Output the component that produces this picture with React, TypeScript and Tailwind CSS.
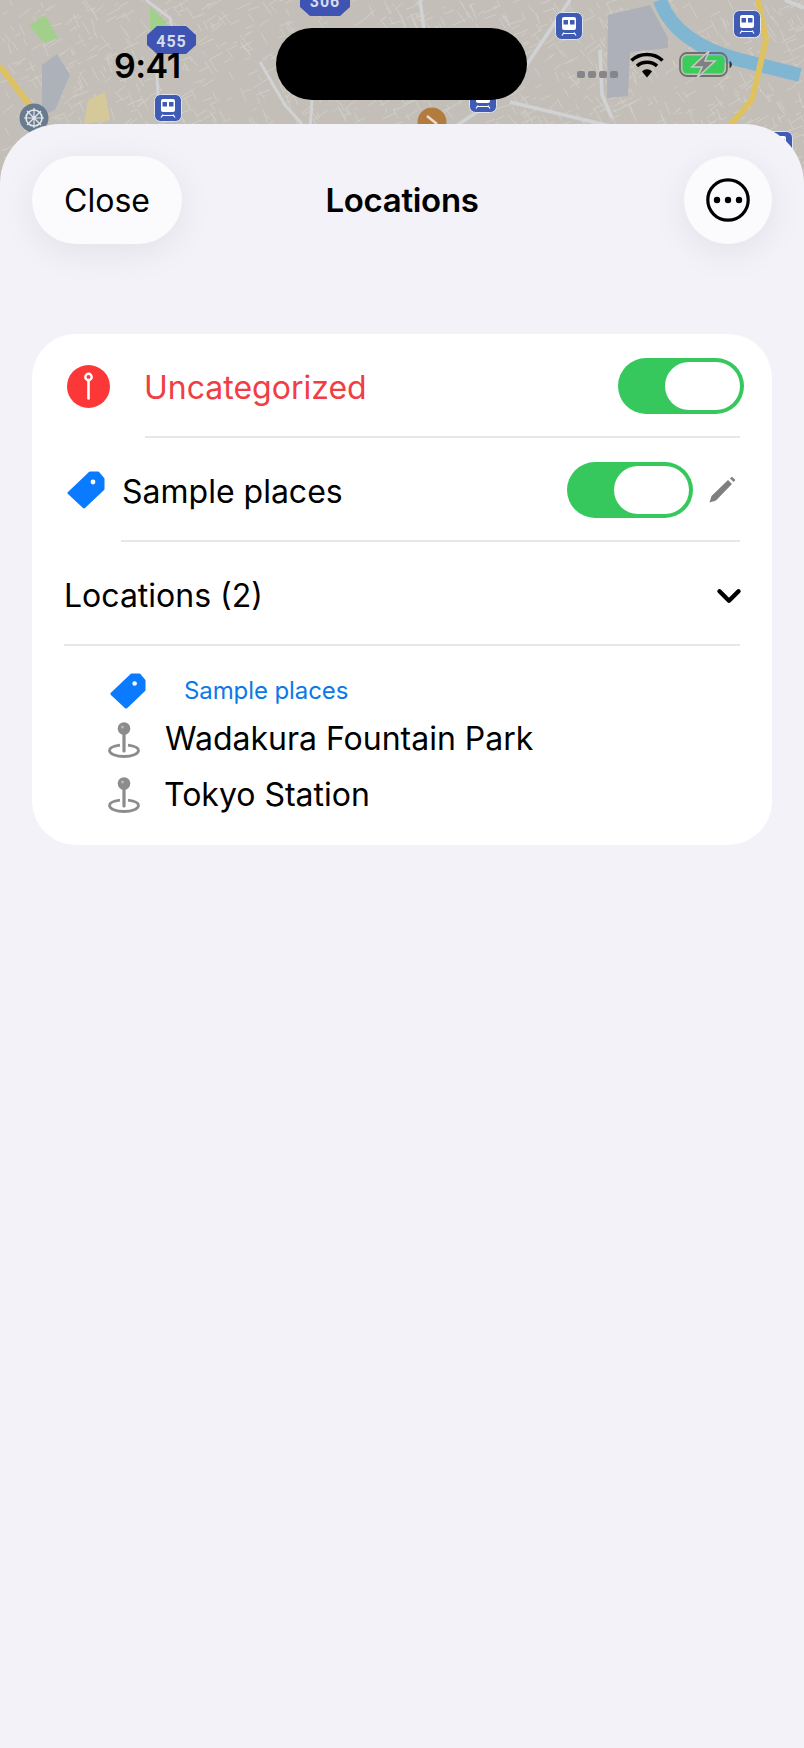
import { ChevronDown } from "lucide-react";

// seeded street network so the map looks the same on every render
function makeStreets() {
  let seed = 41;
  const rnd = () => {
    seed = (seed * 16807) % 2147483647;
    return seed / 2147483647;
  };
  const parts: string[] = [];
  for (let i = 0; i < 1500; i++) {
    const x = rnd() * 804;
    const y = rnd() * 210;
    const a = (i % 2 === 0 ? -0.5 : 1.05) + (rnd() - 0.5) * 0.4;
    const l = 4 + rnd() * 13;
    const x2 = x + Math.cos(a) * l;
    const y2 = y + Math.sin(a) * l;
    parts.push(`M${x.toFixed(1)} ${y.toFixed(1)}L${x2.toFixed(1)} ${y2.toFixed(1)}`);
  }
  return parts.join("");
}

const streets = makeStreets();

function Train({ x, y }: { x: number; y: number }) {
  return (
    <g transform={`translate(${x} ${y})`}>
      <rect x="0.5" y="0.5" width="27" height="27" rx="6" fill="#3f5bb4" stroke="#dfe3ee" strokeWidth="1" />
      <rect x="7" y="5" width="14" height="13" rx="2" fill="#fff" />
      <rect x="8.5" y="8" width="4.5" height="4.5" fill="#3f5bb4" />
      <rect x="15" y="8" width="4.5" height="4.5" fill="#3f5bb4" />
      <path d="M8 21.5h12M7 23.5l2-3M21 23.5l-2-3" stroke="#fff" strokeWidth="1.2" fill="none" />
    </g>
  );
}

function MapBackdrop() {
  return (
    <svg className="absolute top-0 left-0 w-[804px] h-[210px]" viewBox="0 0 804 210">
      <rect width="804" height="210" fill="#c3bfb8" />
      <path d={streets} stroke="#d3d0ca" strokeWidth="0.8" fill="none" />
      {/* parks and blocks */}
      <path d="M29 26L45 15L58 38L44 43Z" fill="#a3cf8d" />
      <path d="M150 6L166 22L168 30L150 30Z" fill="#a3cf8d" />
      <path d="M42 65L57 54L70 75L55 110L42 115Z" fill="#adb1ba" />
      <path d="M88 100L105 92L110 120L84 124Z" fill="#d6c999" />
      <path d="M608 15L650 5L668 38L668 48L630 52L628 96L607 98Z" fill="#adb0b8" />
      {/* river */}
      <path d="M660 0C670 30 700 50 740 60L800 75" stroke="#80b6d2" strokeWidth="14" fill="none" />
      {/* major roads */}
      <path d="M146 0L170 18L173 32M156 55L158 96M260 62L285 105L302 124M312 100L310 130" stroke="#d0d2d3" strokeWidth="3" fill="none" />
      <path d="M570 0L510 90L450 130M510 102L610 126M600 50L602 95L612 118M420 0L424 30" stroke="#d0d2d3" strokeWidth="3.5" fill="none" />
      <path d="M0 66L50 132" stroke="#dec262" strokeWidth="6" fill="none" />
      <path d="M758 0L766 40L752 100L726 130" stroke="#dec262" strokeWidth="6" fill="none" />
      <path d="M785 0L804 8" stroke="#d0d2d3" strokeWidth="4" fill="none" />

      {/* shields */}
      <path d="M157 26H186L196 35V45L186 54H157L147 45V35Z" fill="#3f53b2" />
      <text x="171.5" y="47" textAnchor="middle" fill="#d6dbee" fontFamily="Roboto, sans-serif" fontWeight="700" fontSize="16" letterSpacing="1">455</text>
      <path d="M310 -10H340L350 0V7L340 16H310L300 7V0Z" fill="#3f53b2" />
      <text x="325" y="7" textAnchor="middle" fill="#d6dbee" fontFamily="Roboto, sans-serif" fontWeight="700" fontSize="16" letterSpacing="1">306</text>

      <Train x={154} y={94} />
      <Train x={555} y={12} />
      <Train x={733} y={10} />
      <Train x={469} y={85} />
      <Train x={765} y={131} />

      {/* wheel poi */}
      <circle cx="34" cy="118" r="14.5" fill="#697c8f" />
      <circle cx="34" cy="118" r="8" fill="none" stroke="#e5e8ec" strokeWidth="1.6" />
      <path d="M34 108V128M24 118H44M27 111L41 125M41 111L27 125" stroke="#e5e8ec" strokeWidth="1.2" />
      {/* shop poi */}
      <circle cx="432" cy="122" r="14.5" fill="#b27c3f" />
      <path d="M427 116L437 124M430 124V130" stroke="#eadcc8" strokeWidth="2.5" />
      <path d="M12 156C10 146 18 146 17 156" stroke="#222" strokeWidth="1.5" fill="none" />
    </svg>
  );
}

function Wifi() {
  return (
    <svg width="34" height="26" viewBox="0 0 34 26">
      <path d="M1.5 8.5C10 0.5 24 0.5 32.5 8.5" stroke="#000" strokeWidth="3.6" fill="none" />
      <path d="M7 14C12.5 9 21.5 9 27 14" stroke="#000" strokeWidth="3.6" fill="none" />
      <path d="M12 19.5L17 25.5L22 19.5C19 16.5 15 16.5 12 19.5Z" fill="#000" />
    </svg>
  );
}

function Battery() {
  return (
    <svg width="54" height="28" viewBox="0 0 54 28">
      <rect x="1" y="2" width="47" height="23" rx="7" fill="none" stroke="#6f6f70" strokeWidth="1.8" />
      <rect x="3.5" y="4.5" width="42" height="18" rx="4.5" fill="#3bcc5b" />
      <path d="M50.5 10v7c1.5-.5 2.4-2 2.4-3.5s-.9-3-2.4-3.5Z" fill="#333" />
      <path d="M30 0L13 16H23L18 27L36 10H26Z" fill="#808082" stroke="#c6c9c4" strokeWidth="1.6" />
    </svg>
  );
}

function RedPin() {
  return (
    <svg width="43" height="43" viewBox="0 0 43 43">
      <circle cx="21.5" cy="21.5" r="21.5" fill="#fb3737" />
      <circle cx="21.5" cy="12" r="3.2" fill="#fb3737" stroke="#fff" strokeWidth="2.4" />
      <path d="M21.5 15V33.5" stroke="#fff" strokeWidth="2.6" strokeLinecap="round" />
    </svg>
  );
}

function Tag({ size }: { size: number }) {
  return (
    <svg width={size} height={size} viewBox="0 0 38 38">
      <path
        d="M23 2H31L36 8V18L17 36L2 22Z"
        fill="#0a7aff"
        stroke="#0a7aff"
        strokeWidth="3"
        strokeLinejoin="round"
      />
      <circle cx="26" cy="11" r="2.4" fill="#fff" />
    </svg>
  );
}

function GrayPin() {
  return (
    <svg width="32" height="36" viewBox="0 0 32 36">
      <path d="M12 23.2C5.5 24 1.5 25.8 1.5 28.5C1.5 31.8 8 34.5 16 34.5C24 34.5 30.5 31.8 30.5 28.5C30.5 25.8 26.5 24 20 23.2" fill="none" stroke="#8c8c8e" strokeWidth="2.8" />
      <path d="M16 8V29" stroke="#8c8c8e" strokeWidth="3.2" strokeLinecap="round" />
      <circle cx="16" cy="6.5" r="6.3" fill="#8c8c8e" />
      <circle cx="14.5" cy="5" r="1.6" fill="#b5b5b7" />
    </svg>
  );
}

function Pencil() {
  return (
    <svg width="28" height="28" viewBox="0 0 28 28">
      <path d="M1.5 26.5L3.5 20L20 4L24 8L8 24.5Z" fill="#7f7f7f" />
      <path d="M22 2.5L24 .8L27.4 4L25.6 6Z" fill="#7f7f7f" />
    </svg>
  );
}

function Toggle() {
  return (
    <div className="flex justify-end w-[126px] h-[56px] p-[4px] rounded-full bg-[#36c85c]">
      <div className="w-[75px] h-[48px] rounded-full bg-white" />
    </div>
  );
}

function Divider({ inset }: { inset: string }) {
  return <div className={`h-[2px] bg-[#e7e7ea] mr-[32px] ${inset}`} />;
}

export default function App() {
  return (
    <div
      className="relative w-[804px] h-[1748px] overflow-hidden bg-[#f2f2f8] text-black"
      style={{ fontFamily: "Inter, 'Noto Sans', sans-serif" }}
    >
      <MapBackdrop />

      {/* status bar */}
      <div className="relative grid grid-cols-[276px_251px_1fr] h-[124px] items-start">
        <div className="pl-[114px] pt-[44px] text-[34px] leading-[44px] font-semibold tracking-[-0.5px]">9:41</div>
        <div className="mt-[28px] h-[72px] rounded-[36px] bg-black" />
        <div className="flex items-center pl-[50px] pt-[51px]">
          <div className="flex gap-[3px] mt-[18px]">
            <span className="w-[8px] h-[7px] rounded-[2px] bg-[#86868a]" />
            <span className="w-[8px] h-[7px] rounded-[2px] bg-[#86868a]" />
            <span className="w-[8px] h-[7px] rounded-[2px] bg-[#86868a]" />
            <span className="w-[8px] h-[7px] rounded-[2px] bg-[#86868a]" />
          </div>
          <div className="ml-[12px]">
            <Wifi />
          </div>
          <div className="ml-[15px]">
            <Battery />
          </div>
        </div>
      </div>

      {/* sheet */}
      <div className="relative h-[1624px] rounded-t-[60px] bg-[#f2f2f8] px-[32px] pt-[32px]">
        <div className="flex items-center justify-between h-[88px]">
          <div className="flex-1">
            <button className="w-[150px] h-[88px] pt-[2px] rounded-[44px] bg-[#fbfbfe] text-[32px] shadow-[0_8px_36px_rgba(0,0,0,0.07)]">
              Close
            </button>
          </div>
          <div className="pt-[2px] text-[33px] font-semibold tracking-[-0.3px]">Locations</div>
          <div className="flex flex-1 justify-end">
            <button className="flex items-center justify-center w-[88px] h-[88px] rounded-full bg-[#fbfbfe] shadow-[0_8px_36px_rgba(0,0,0,0.07)]">
              <svg width="44" height="44" viewBox="0 0 44 44">
                <circle cx="22" cy="22" r="20.2" fill="none" stroke="#000" strokeWidth="3.2" />
                <circle cx="11" cy="22" r="3.2" />
                <circle cx="22" cy="22" r="3.2" />
                <circle cx="33" cy="22" r="3.2" />
              </svg>
            </button>
          </div>
        </div>

        <div className="mt-[90px] rounded-[44px] bg-white pb-[23px]">
          <div className="flex items-center h-[102px] pt-[2px] pl-[35px] pr-[28px]">
            <RedPin />
            <span className="ml-[34px] mt-[3px] flex-1 text-[32px] text-[#f03e44]">Uncategorized</span>
            <Toggle />
          </div>
          <Divider inset="ml-[113px]" />

          <div className="flex items-center h-[102px] pt-[2px] pl-[35px] pr-[36px]">
            <Tag size={38} />
            <span className="ml-[17px] mt-[3px] flex-1 text-[32px]">Sample places</span>
            <Toggle />
            <div className="ml-[15px]">
              <Pencil />
            </div>
          </div>
          <Divider inset="ml-[89px]" />

          <div className="flex items-center h-[102px] pt-[2px] pl-[32px] pr-[24px]">
            <span className="mt-[3px] flex-1 text-[32px]">Locations (2)</span>
            <ChevronDown className="mt-[3px]" size={38} strokeWidth={2.8} />
          </div>
          <Divider inset="ml-[32px]" />

          <div className="flex items-center h-[66px] pl-[78px] pt-[23px]">
            <Tag size={36} />
            <span className="ml-[38px] text-[24px] tracking-[-0.1px] text-[#0a7ae8]">Sample places</span>
          </div>
          <div className="flex items-center h-[55px] pl-[76px]">
            <GrayPin />
            <span className="ml-[25px] -mt-[2px] text-[32px]">Wadakura Fountain Park</span>
          </div>
          <div className="flex items-center h-[55px] pl-[76px]">
            <GrayPin />
            <span className="ml-[24px] text-[32px]">Tokyo Station</span>
          </div>
        </div>
      </div>
    </div>
  );
}
